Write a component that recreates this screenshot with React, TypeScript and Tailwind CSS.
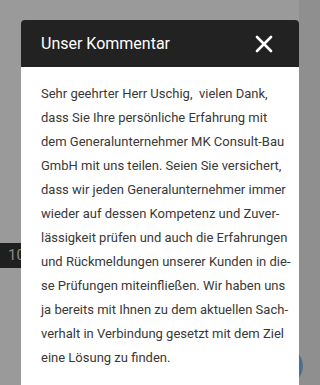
import { X } from 'lucide-react'

const lines = [
  'Sehr geehrter Herr Uschig,\u00a0 vielen Dank,',
  'dass Sie Ihre persönliche Erfahrung mit',
  'dem Generalunternehmer MK Consult-Bau',
  'GmbH mit uns teilen. Seien Sie versichert,',
  'dass wir jeden Generalunternehmer immer',
  'wieder auf dessen Kompetenz und Zuver-',
  'lässigkeit prüfen und auch die Erfahrungen',
  'und Rückmeldungen unserer Kunden in die-',
  'se Prüfungen miteinfließen. Wir haben uns',
  'ja bereits mit Ihnen zu dem aktuellen Sach-',
  'verhalt in Verbindung gesetzt mit dem Ziel',
  'eine Lösung zu finden.',
]

export default function App() {
  return (
    <div className="relative h-[385px] w-[320px] overflow-hidden bg-[#9a9a9a] font-['Roboto',sans-serif]">
      {/* page behind the overlay (dimmed) */}
      <div className="flex h-full">
        <div className="flex flex-1 flex-col pt-[243px]">
          <div className="flex h-[27px] w-[30px] items-center bg-[#1f1f1f] pl-2 text-[15px] text-[#8a8a8a]">10</div>
          <div className="relative mt-[79px] mr-[-4px] h-10 w-10 self-end rounded-full bg-[#4a6f8f]" />
        </div>
        <div className="w-[21px] bg-[#8f8f8f]" />
      </div>

      {/* modal overlay */}
      <div className="absolute inset-0 flex items-start justify-center pt-5">
        <div className="w-[278px] overflow-hidden rounded-t">
          <div className="flex h-[47px] items-center justify-between bg-[#222222] pl-5 pr-[21px]">
            <h2 className="text-[16px] text-white">Unser Kommentar</h2>
            <X className="h-7 w-7 text-white" strokeWidth={2.3} />
          </div>
          <div className="bg-white px-5 pt-[15px] pb-6">
            {lines.map((line) => (
              <p key={line} className="whitespace-nowrap text-[13px] leading-6 text-[#383838]">
                {line}
              </p>
            ))}
          </div>
        </div>
      </div>
    </div>
  )
}
